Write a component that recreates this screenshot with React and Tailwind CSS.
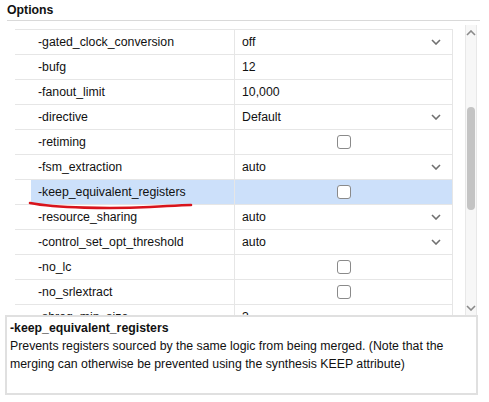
import React from 'react';

const rows = [
  { name: '-gated_clock_conversion', value: 'off', kind: 'select' },
  { name: '-bufg', value: '12', kind: 'text' },
  { name: '-fanout_limit', value: '10,000', kind: 'text' },
  { name: '-directive', value: 'Default', kind: 'select' },
  { name: '-retiming', kind: 'check' },
  { name: '-fsm_extraction', value: 'auto', kind: 'select' },
  { name: '-keep_equivalent_registers', kind: 'check', selected: true },
  { name: '-resource_sharing', value: 'auto', kind: 'select' },
  { name: '-control_set_opt_threshold', value: 'auto', kind: 'select' },
  { name: '-no_lc', kind: 'check' },
  { name: '-no_srlextract', kind: 'check' },
  { name: '-shreg_min_size', value: '3', kind: 'text' },
];

const Chevron = ({ up = false, className = '' }) => (
  <svg width="10" height="6" viewBox="0 0 10 6" className={className}>
    <path
      d={up ? 'M1 5 L5 1 L9 5' : 'M1 1 L5 5 L9 1'}
      fill="none"
      stroke="currentColor"
      strokeWidth="1.6"
    />
  </svg>
);

const OptionRow = ({ row }) => {
  const bg = row.selected ? 'bg-[#cce0fa]' : 'bg-white';
  return (
    <div className="flex h-[25px] border-b border-[#e6e6e6]">
      <div className="w-[16px] shrink-0" />
      <div className={`flex w-[204px] items-center border-r border-[#e6e6e6] pl-[7px] ${bg}`}>
        {row.name}
      </div>
      <div className={`flex flex-1 items-center border-r border-[#e6e6e6] ${bg}`}>
        {row.kind === 'check' ? (
          <div className="flex flex-1 justify-center">
            <div className="h-[14px] w-[14px] rounded-[3px] border border-[#8a8a8a] bg-white" />
          </div>
        ) : (
          <div className="flex flex-1 items-center justify-between pl-[7px] pr-[11px]">
            <span>{row.value}</span>
            {row.kind === 'select' && <Chevron className="text-[#707070]" />}
          </div>
        )}
      </div>
    </div>
  );
};

export default function App() {
  return (
    <div
      className="relative h-[402px] w-[489px] overflow-hidden bg-white text-[12.3px] text-[#111]"
      style={{ fontFamily: '"Liberation Sans", Arial, sans-serif' }}
    >
      {/* header */}
      <div className="mx-[7px] mr-[9px] border-b border-[#d9d9d9] pt-[3px] pb-[3px] font-bold leading-[14px]">
        Options
      </div>

      {/* table + scrollbar */}
      <div className="flex h-[294px]">
        <div className="ml-[15px] mt-[8px] w-[438px] overflow-hidden border-t border-[#e6e6e6]">
          {rows.map((row) => (
            <OptionRow key={row.name} row={row} />
          ))}
        </div>
        <div className="ml-[12px] mt-[4px] flex w-[12px] flex-col items-center border-x border-[#e8e8e8] bg-[#f7f7f7]">
          <Chevron up className="mt-[5px] text-[#8a8a8a]" />
          <div className="mt-[71px] h-[103px] w-[8px] rounded-full bg-[#c4c4c4]" />
          <div className="flex-1" />
          <Chevron className="mb-[4px] text-[#8a8a8a]" />
        </div>
      </div>

      {/* description */}
      <div className="ml-[5px] h-[80px] w-[473px] border-2 border-[#e0e0e0] bg-white px-[3px] pt-[2px] leading-[18px]">
        <div className="font-bold">-keep_equivalent_registers</div>
        <div>
          Prevents registers sourced by the same logic from being merged. (Note that the merging can
          otherwise be prevented using the synthesis KEEP attribute)
        </div>
      </div>

      {/* red hand-drawn underline */}
      <svg className="pointer-events-none absolute left-0 top-0" width="489" height="402">
        <path
          d="M30 203 C 55 208, 110 209, 150 207 S 185 205, 191 205"
          fill="none"
          stroke="#d8141c"
          strokeWidth="2.6"
          strokeLinecap="round"
        />
      </svg>
    </div>
  );
}
